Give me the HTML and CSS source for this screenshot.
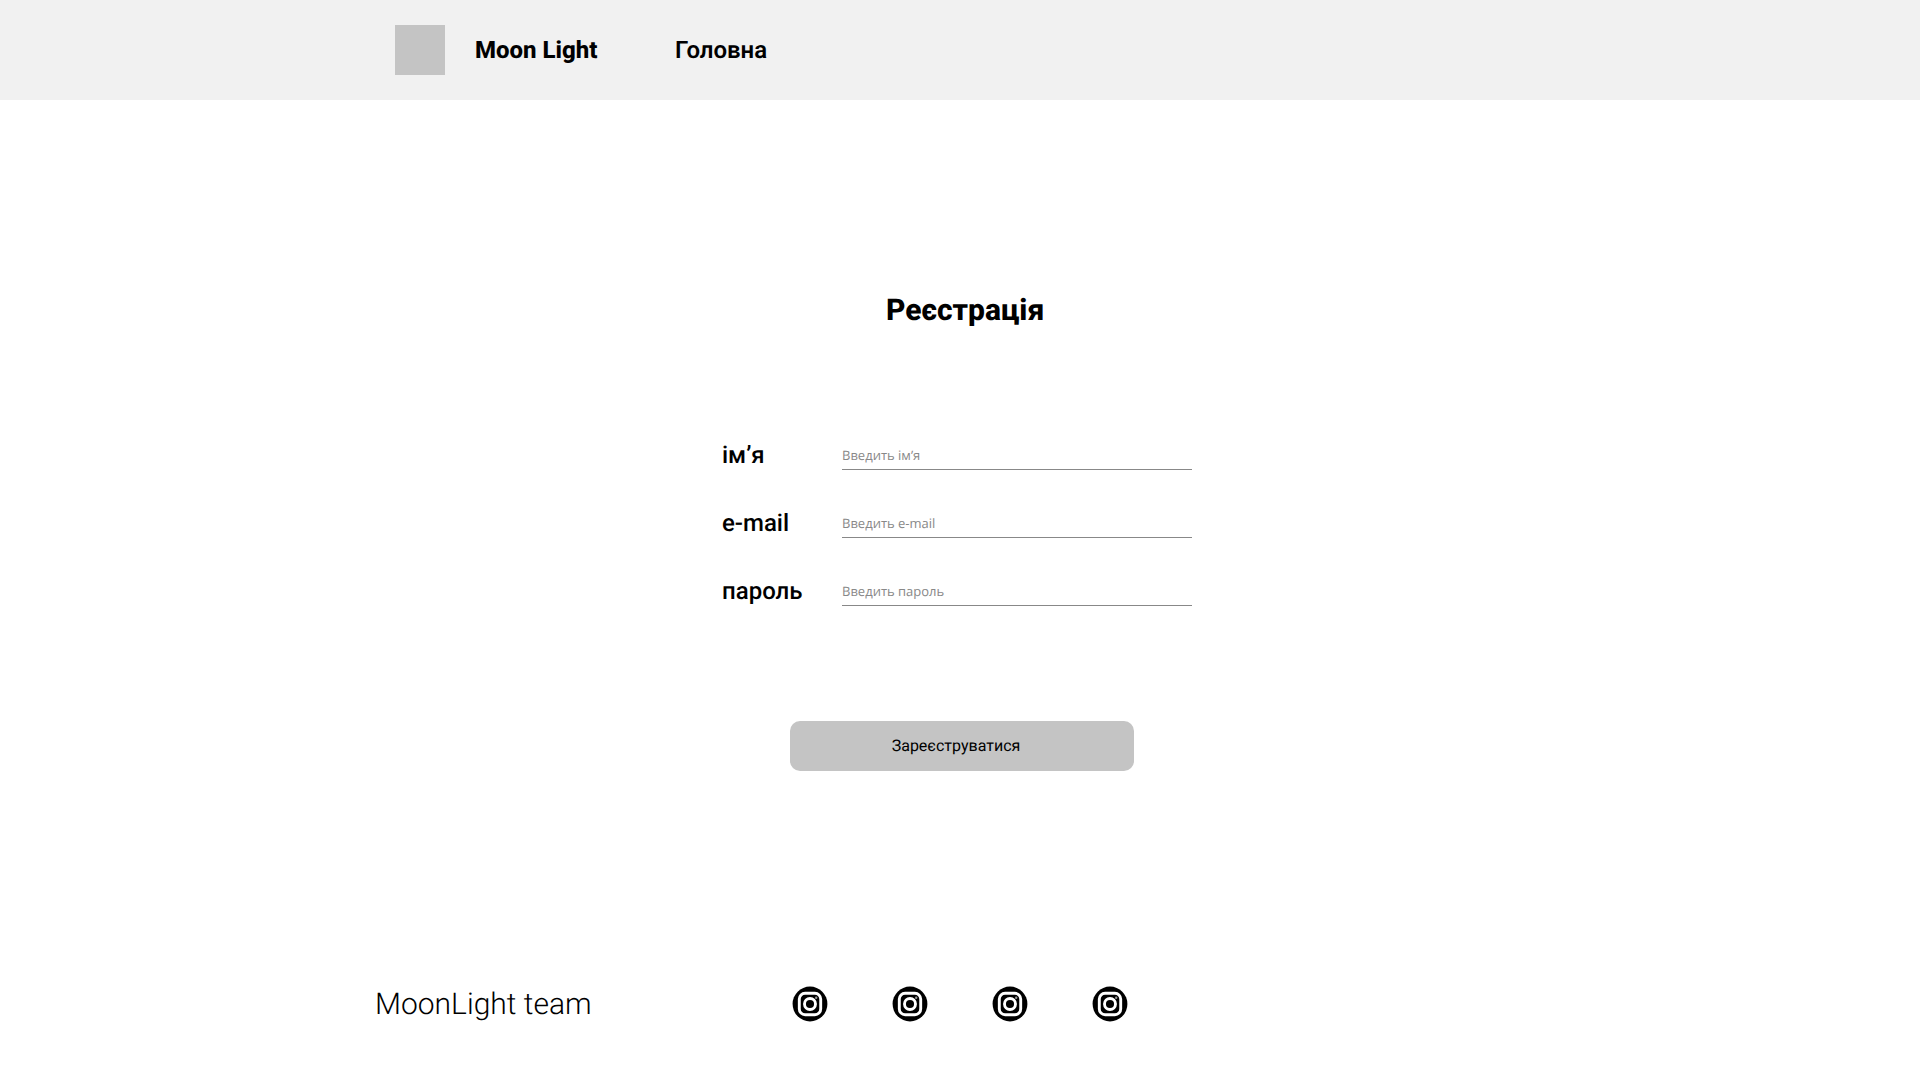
FILE: index.html
```html
<!DOCTYPE html>
<html lang="uk">
<head>
<meta charset="utf-8">
<title>Moon Light</title>
<link rel="stylesheet" href="styles.css">
</head>
<body>
<svg width="0" height="0" class="sprite">
  <symbol id="instagram" viewBox="0 0 36 36">
    <circle cx="18" cy="18" r="17.4" fill="#000"/>
    <rect x="7.3" y="7.3" width="21.4" height="21.4" rx="5.8" fill="none" stroke="#fff" stroke-width="2.9"/>
    <circle cx="18" cy="18" r="5.5" fill="none" stroke="#fff" stroke-width="2.9"/>
    <circle cx="24.2" cy="11.8" r="1.2" fill="#999"/>
  </symbol>
</svg>
<header class="header">
  <div class="logo"></div>
  <span class="brand">Moon Light</span>
  <nav><a class="nav-link">Головна</a></nav>
</header>
<main class="main">
  <h1 class="title">Реєстрація</h1>
  <form class="form">
    <div class="row"><label class="label" for="name">ім’я</label><input class="input" id="name" placeholder="Введить ім’я"></div>
    <div class="row"><label class="label" for="email">e-mail</label><input class="input" id="email" placeholder="Введить e-mail"></div>
    <div class="row"><label class="label" for="password">пароль</label><input class="input" id="password" placeholder="Введить пароль"></div>
    <button class="submit" type="button">Зареєструватися</button>
  </form>
</main>
<footer class="footer">
  <span class="team">MoonLight team</span>
  <div class="socials">
    <svg class="icon"><use href="#instagram"/></svg>
    <svg class="icon"><use href="#instagram"/></svg>
    <svg class="icon"><use href="#instagram"/></svg>
    <svg class="icon"><use href="#instagram"/></svg>
  </div>
</footer>
</body>
</html>
```
FILE: styles.css
```css
* { box-sizing: border-box; }
body {
  margin: 0;
  height: 1080px;
  display: flex;
  flex-direction: column;
  overflow: hidden;
  background: #fff;
  color: #000;
  font-family: Roboto, sans-serif;
  text-rendering: geometricPrecision;
}
.sprite { display: none; }
.header {
  display: flex;
  align-items: center;
  height: 100px;
  padding-left: 395px;
  background: #f1f1f1;
}
.logo { width: 50px; height: 50px; background: #c4c4c4; }
.brand {
  width: 200px;
  margin-left: 30px;
  font-size: 24px;
  line-height: 28px;
  font-weight: 800;
}
.nav-link { font-size: 24px; line-height: 28px; font-weight: 600; }
.main { flex: 1; padding: 193px 0 0 722px; }
.title {
  margin: 0 0 112px 164px;
  font-size: 30px;
  line-height: 36px;
  font-weight: 800;
}
.form { width: 470px; }
.row { display: flex; height: 68px; }
.label {
  width: 120px;
  font-size: 24px;
  line-height: 28px;
  font-weight: 500;
}
.input {
  width: 350px;
  height: 29px;
  padding: 0 0 1px;
  border: 0;
  border-bottom: 1px solid #888;
  outline: 0;
  background: none;
  font: 13px/18px "Open Sans", "Noto Sans", sans-serif;
  text-rendering: inherit;
}
.input::placeholder { color: #888; opacity: 1; }
.submit {
  width: 344px;
  height: 50px;
  margin: 76px 0 0 68px;
  padding: 0 12px 2px 0;
  border: 0;
  border-radius: 10px;
  background: #c4c4c4;
  color: #000;
  font: 16px/19px Roboto, sans-serif;
  text-rendering: inherit;
}
.footer {
  display: flex;
  align-items: center;
  height: 152px;
  padding-left: 375px;
}
.team { width: 417px; padding-top: 2px; font-size: 30px; line-height: 36px; font-weight: 300; }
.socials { display: flex; gap: 64px; }
.icon { display: block; width: 36px; height: 36px; }
```
